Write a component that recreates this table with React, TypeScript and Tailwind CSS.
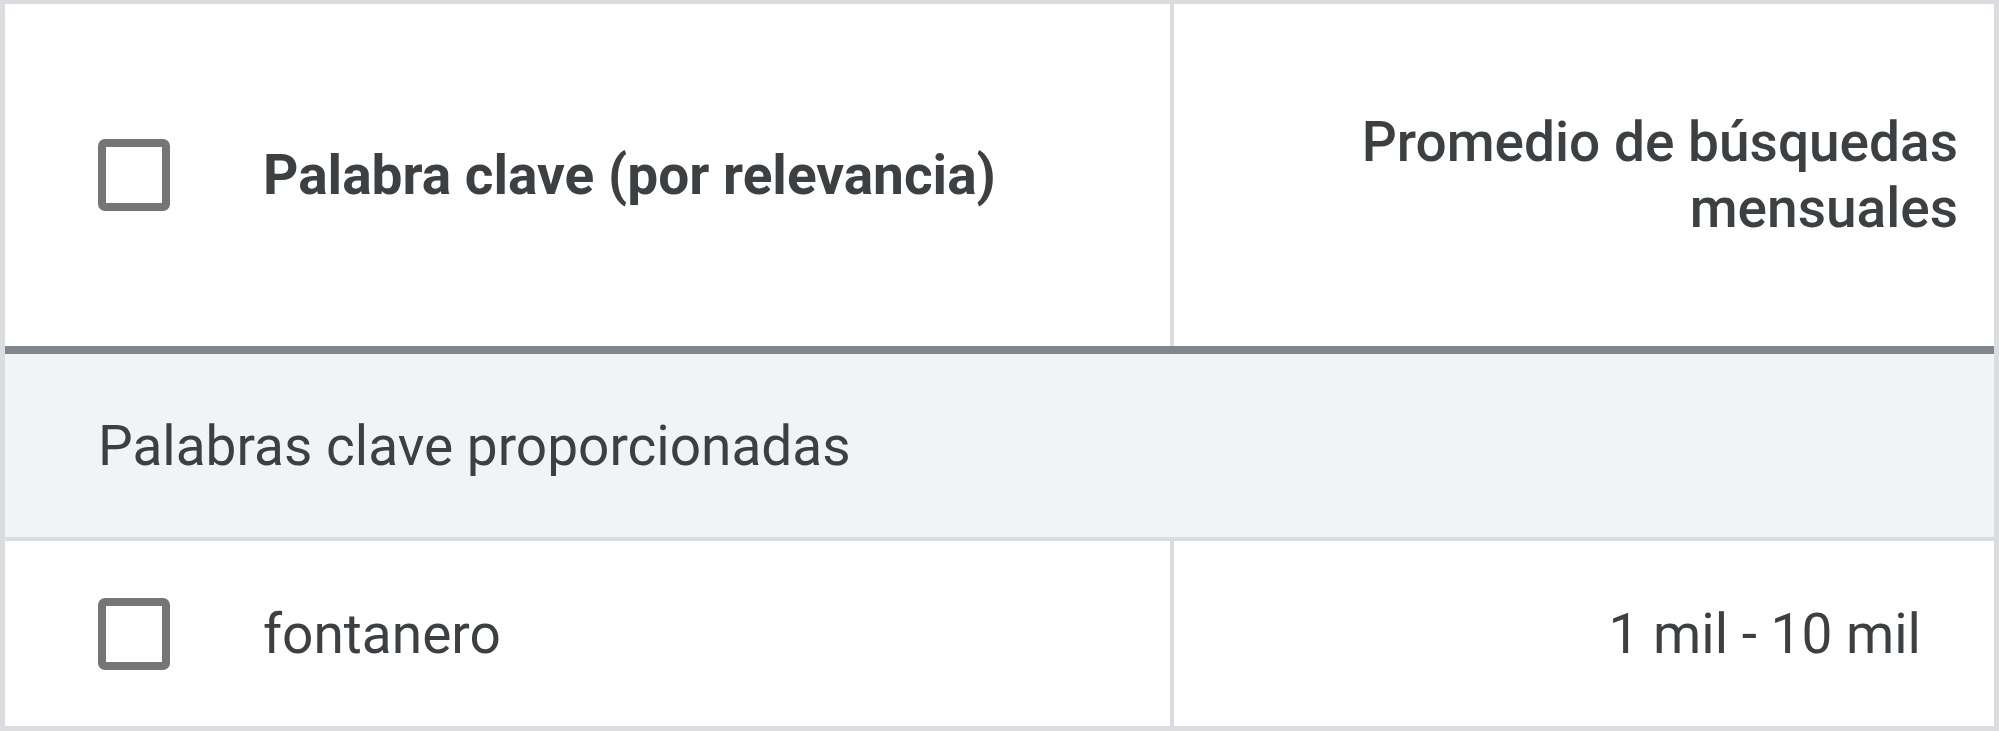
export default function App() {
  return (
    <div
      className="box-border h-[731px] w-[1999px] border-x-[5px] border-t-4 border-b-[5px] border-[#dadce0] bg-white text-[#3c4043]"
      style={{ fontFamily: "Roboto, 'Noto Sans', sans-serif" }}
    >
      {/* header */}
      <div className="flex h-[342px]">
        <div className="box-border flex w-[1169px] items-center border-r-4 border-[#dadce0] pl-[93px]">
          <span className="box-border h-[72px] w-[72px] shrink-0 rounded-[7px] border-[8px] border-[#757575]" />
          <span className="ml-[93px] text-[55px] font-bold leading-[66px]">
            Palabra clave (por relevancia)
          </span>
        </div>
        <div className="flex flex-1 items-center justify-end pr-[36px]">
          <span className="text-right text-[55px] font-medium leading-[66px]">
            Promedio de búsquedas
            <br />
            mensuales
          </span>
        </div>
      </div>
      <div className="h-[8px] bg-[#80868b]" />

      {/* group row */}
      <div className="flex h-[187px] items-center border-b-4 border-[#dadce0] bg-[#f1f3f4] pl-[93px]">
        <span className="text-[55px] leading-[66px]">Palabras clave proporcionadas</span>
      </div>

      {/* data row */}
      <div className="flex h-[185px]">
        <div className="box-border flex w-[1169px] items-center border-r-4 border-[#dadce0] pl-[93px]">
          <span className="box-border h-[72px] w-[72px] shrink-0 rounded-[7px] border-[8px] border-[#757575]" />
          <span className="ml-[93px] text-[55px] leading-[66px]">fontanero</span>
        </div>
        <div className="flex flex-1 items-center justify-end pr-[73px]">
          <span className="text-[55px] leading-[66px]">1 mil - 10 mil</span>
        </div>
      </div>
    </div>
  );
}
